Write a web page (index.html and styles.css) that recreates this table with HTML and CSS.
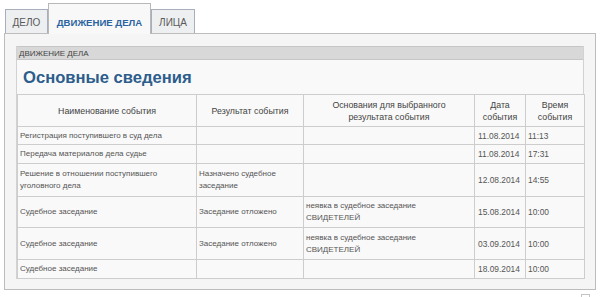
FILE: index.html
```html
<!DOCTYPE html>
<html lang="ru">
<head>
<meta charset="utf-8">
<title>Движение дела</title>
<link rel="stylesheet" href="styles.css">
</head>
<body>
<div class="wrap">
  <div class="tabs">
    <div class="tab">ДЕЛО</div>
    <div class="tab active">ДВИЖЕНИЕ ДЕЛА</div>
    <div class="tab">ЛИЦА</div>
  </div>
  <div class="panel">
    <div class="section">
      <div class="section-title">ДВИЖЕНИЕ ДЕЛА</div>
      <div class="heading">Основные сведения</div>
      <table class="events">
        <colgroup>
          <col class="c1"><col class="c2"><col class="c3"><col class="c4"><col class="c5">
        </colgroup>
        <thead>
          <tr class="hdr">
            <th>Наименование события</th>
            <th>Результат события</th>
            <th>Основания для выбранного<br>результата события</th>
            <th>Дата<br>события</th>
            <th>Время<br>события</th>
          </tr>
        </thead>
        <tbody>
          <tr class="r1">
            <td>Регистрация поступившего в суд дела</td><td></td><td></td><td class="num">11.08.2014</td><td class="num">11:13</td>
          </tr>
          <tr class="r2">
            <td>Передача материалов дела судье</td><td></td><td></td><td class="num">11.08.2014</td><td class="num">17:31</td>
          </tr>
          <tr class="r3">
            <td>Решение в отношении поступившего<br>уголовного дела</td><td>Назначено судебное<br>заседание</td><td></td><td class="num">12.08.2014</td><td class="num">14:55</td>
          </tr>
          <tr class="r4">
            <td>Судебное заседание</td><td>Заседание отложено</td><td>неявка в судебное заседание<br>СВИДЕТЕЛЕЙ</td><td class="num">15.08.2014</td><td class="num">10:00</td>
          </tr>
          <tr class="r5">
            <td>Судебное заседание</td><td>Заседание отложено</td><td>неявка в судебное заседание<br>СВИДЕТЕЛЕЙ</td><td class="num">03.09.2014</td><td class="num">10:00</td>
          </tr>
          <tr class="r6">
            <td>Судебное заседание</td><td></td><td></td><td class="num">18.09.2014</td><td class="num">10:00</td>
          </tr>
        </tbody>
      </table>
    </div>
  </div>
  <div class="foot"><span class="mini"></span></div>
</div>
</body>
</html>
```
FILE: styles.css
```css
html, body {
  margin: 0;
  padding: 0;
  background: #ffffff;
}
body {
  font-family: "Liberation Sans", Arial, sans-serif;
  color: #555;
}
.wrap {
  padding: 4px 4px 0 4px;
}
.tabs {
  display: flex;
  align-items: flex-end;
  padding-left: 1px;
  height: 29px;
  position: relative;
  z-index: 1;
}
.tab {
  box-sizing: border-box;
  height: 24px;
  padding: 2px 6px 0 6px;
  border: 1px solid #a8aebb;
  border-bottom: none;
  background: #eeeff1;
  color: #5a5a5a;
  font-size: 10px;
  line-height: 22px;
  width: 43px;
  text-align: center;
}
.tab.active {
  height: 31px;
  width: 103px;
  margin-bottom: -1px;
  padding-top: 8px;
  border-color: #b8b8b8;
  background: #f8f8f8;
  color: #2b64a0;
  font-weight: bold;
  font-size: 9.6px;
}
.tab:last-child {
  width: 44px;
}
.panel {
  border: 1px solid #bdbdbd;
  background: #f5f5f5;
  padding: 12px 11px 10px 11px;
}
.section {
  border-left: 1px solid #d2d2d2;
  border-right: 1px solid #d2d2d2;
  background: #f9f9f9;
}
.section-title {
  background: #d8d8d8;
  border-top: 1px solid #c6c6c6;
  border-bottom: 1px solid #c6c6c6;
  height: 12px;
  line-height: 13px;
  font-size: 8px;
  color: #444;
  padding-left: 2px;
}
.heading {
  color: #2c5d8c;
  font-size: 16.6px;
  font-weight: bold;
  line-height: 20px;
  padding: 8px 6px 6px 6px;
}
.events {
  width: 100%;
  border-collapse: collapse;
  font-size: 8px;
  color: #555;
  table-layout: fixed;
}
.events col.c1 { width: 179px; }
.events col.c2 { width: 107px; }
.events col.c3 { width: 171px; }
.events col.c4 { width: 51px; }
.events col.c5 { width: 59px; }
.events th, .events td {
  border: 1px solid #cdcdcd;
  background: #f9f9f9;
  vertical-align: middle;
  text-align: left;
  padding: 2px 2px;
  line-height: 12px;
}
.events th {
  font-weight: normal;
  text-align: center;
  color: #444;
  font-size: 8.8px;
  height: 27px;
}
.events td.num {
  font-size: 8.4px;
}
.events td:nth-child(4) { padding-left: 3px; }
.events tr.r1 td { height: 13px; }
.events tr.r2 td { height: 14px; }
.events tr.r3 td { height: 28px; }
.events tr.r4 td { height: 26px; }
.events tr.r5 td { height: 27px; }
.events tr.r6 td { height: 14px; }
.foot {
  display: flex;
  justify-content: flex-end;
  padding-right: 6px;
  padding-top: 4px;
}
.mini {
  display: block;
  width: 7px;
  height: 4px;
  border: 1px solid #c4c4c4;
  border-bottom: none;
}
```
